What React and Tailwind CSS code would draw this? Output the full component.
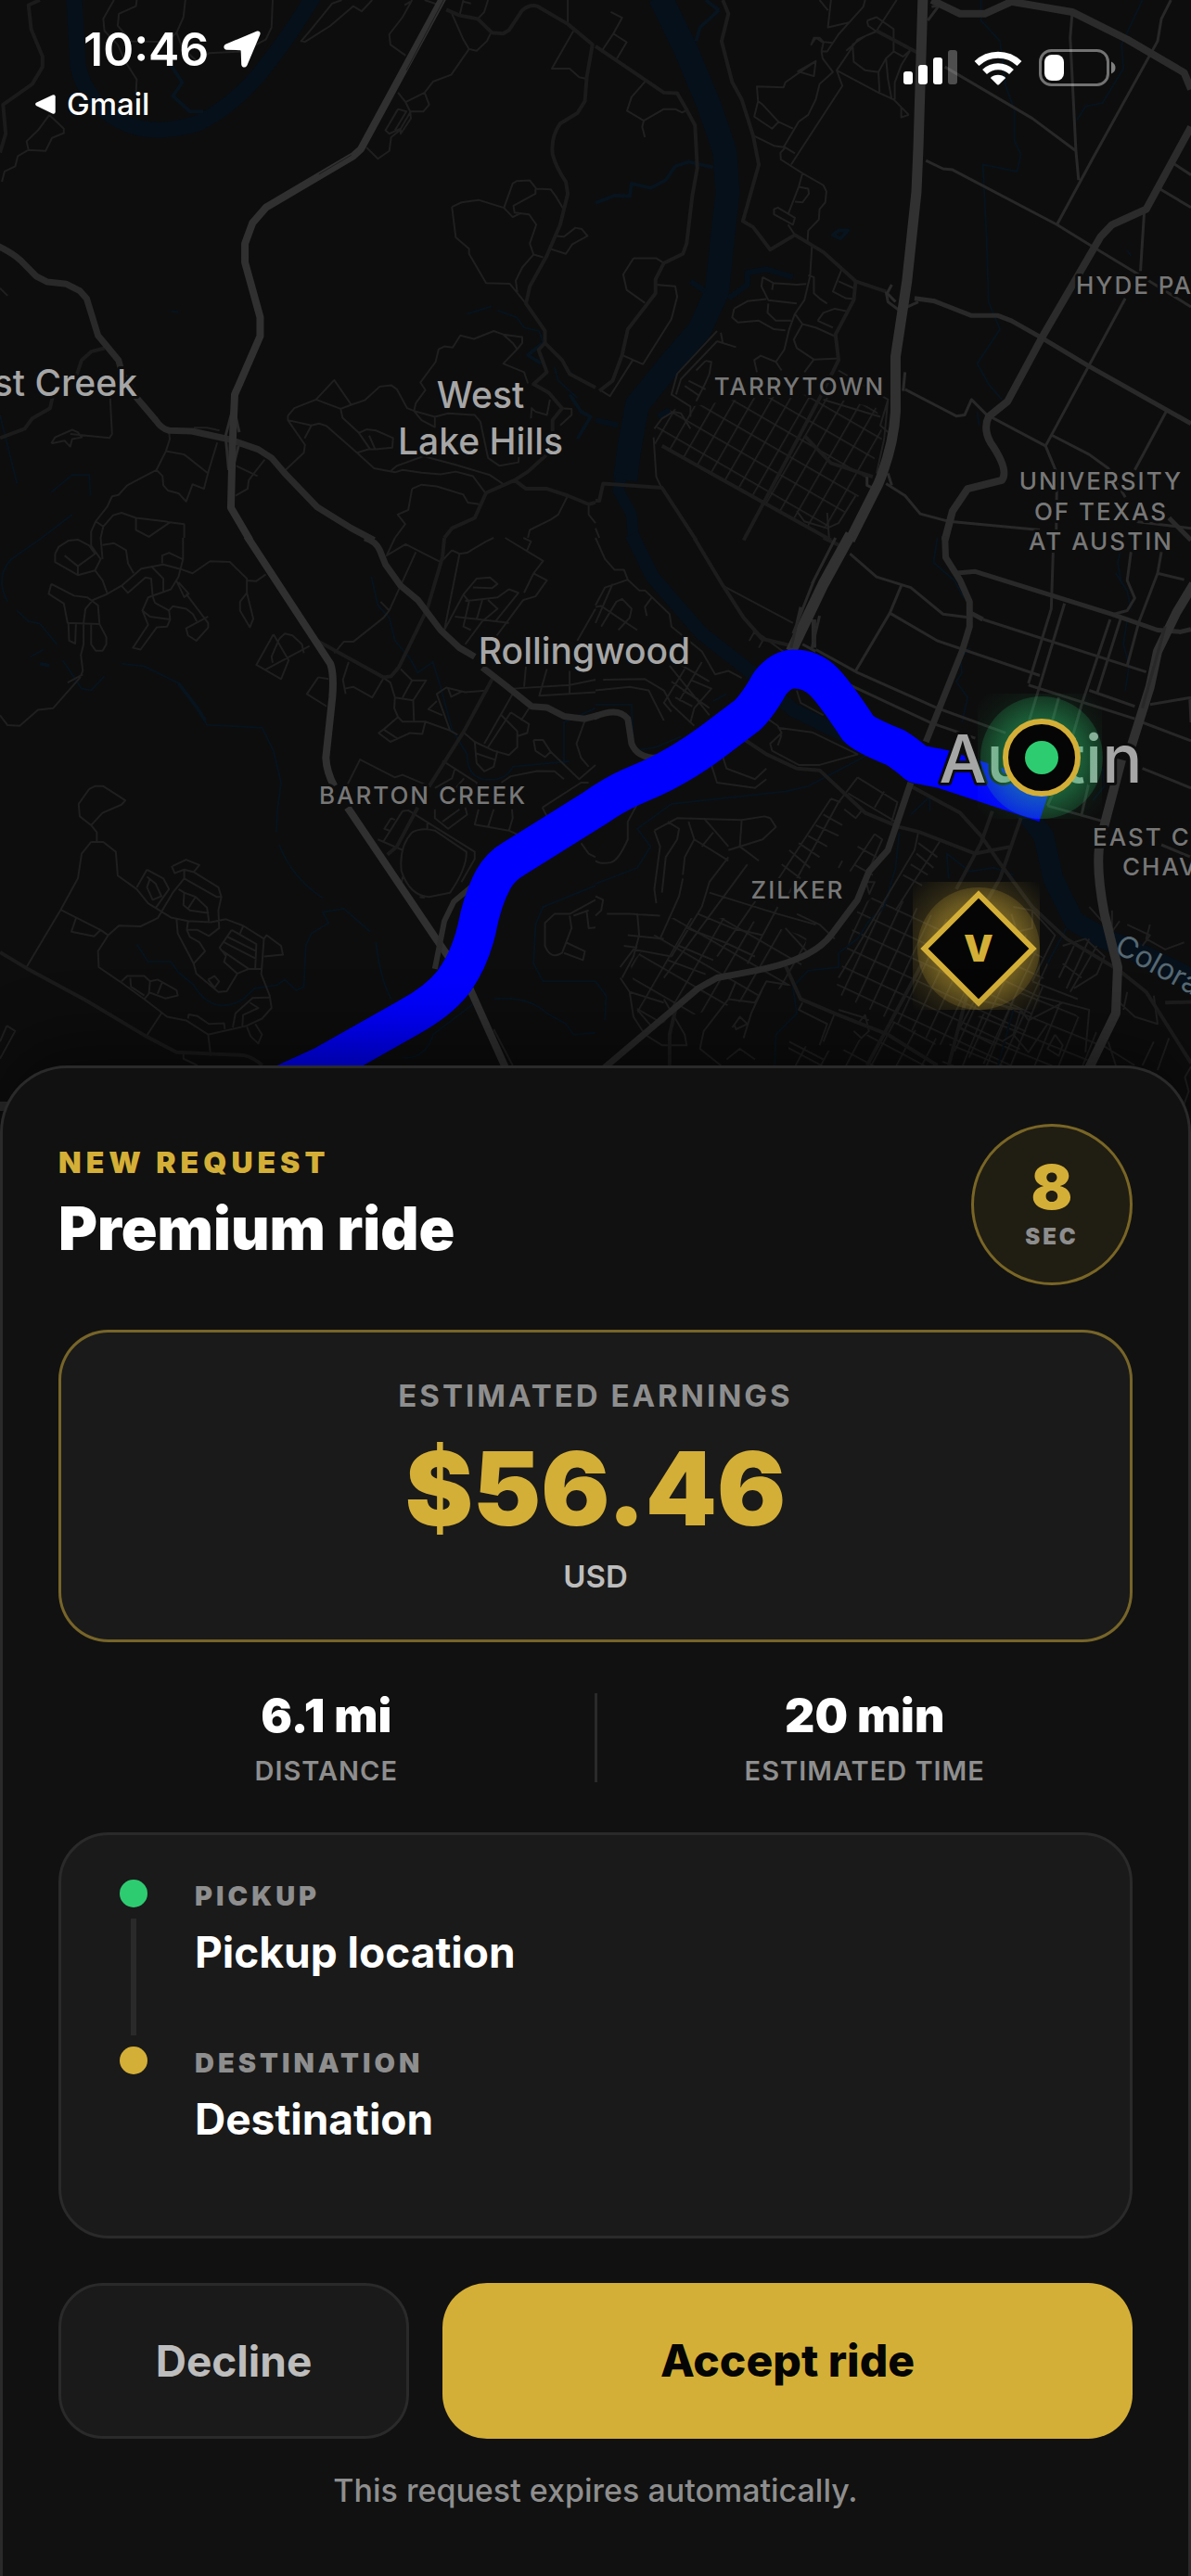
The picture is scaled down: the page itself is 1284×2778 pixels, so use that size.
import React from 'react';

// Map tiles. Every tile has its own grid, so strokes are kept non-scaling.
const tiles = [
  {
    id: 'nw',
    transform: 'scale(0.40944 0.3699)',
    layers: [
      { color: '#06101a', width: 17, d: 'M195 -10L205 190Q225 300 320 355Q400 400 520 360Q600 320 680 220Q760 110 825 -10' },
      { color: '#07131d', width: 4, d: 'M450 190L480 240 455 280 500 325 535 325M1430 1000L1390 1035 1425 1060M1500 1150L1530 1200 1555 1215 1520 1280' },
      { color: '#07131d', width: 2, d: 'M1230 915L1295 893M1310 905L1360 925 1380 955 1420 965 1430 1000M1460 1070L1470 1110 1520 1160M0 1210L20 1300 45 1410M135 1435L190 1385 235 1385 238 1445M450 908L470 910M110 1568L190 1500' },
      { color: '#1f1f1f', width: 2, d: 'M360 0L358 18 313 40 310 75 345 120 440 122 465 95 483 50 488 0M300 0L272 55 275 90 310 130 M310 130L330 180 360 232 358 270M718 0L715 80 700 115 640 150 550 155 520 180 M465 95L480 140 520 180M130 335L168 375 168 388 137 402 120 440 75 437 70 412 100 380 130 335M75 437L47 455 40 485 12 500 5 530M900 0L875 10 820 85 793 120 803 122 870 75 930 18 952 33 980 0M1085 0L1060 50 1025 100 1028 130 1068 162M1080 5L1065 15M1118 0L1150 12M1220 0L1210 45M1220 5L1240 10M1285 0L1275 35 1258 55M1495 0L1495 70M1190 40L1220 115 1235 143 1188 218 1140 238 1118 270 1068 298 1048 270M1235 143L1255 148 1282 120 1293 95M1118 270L1130 305 1115 325 1080 325 1068 298M1080 325L1082 345 1055 390 1055 378 1030 400 1025 440 995 463 965 430M1048 318L1015 380 1025 390 1055 375 1080 328M1048 318L1070 325 1040 380M1510 90L1453 200 1500 200 1525 225 1545 230M1190 603L1200 692 1235 725 1235 740 1280 825 1342 827 1385 885M1190 603L1215 590 1260 583 1327 606 1350 535 1360 528 1395 526 1412 550 1450 552 1465 575 1485 612M1410 550L1410 565 1352 600 1355 620 1393 625 1412 655 1395 710 1405 742 1430 750M1327 606L1350 633 1370 622M1405 742L1375 780 1358 818 1362 852M1465 688L1485 690 1515 664 1532 668 1547 688 1507 712 1490 740 1448 725M0 840L20 862M1090 1198L1095 1175 1120 1137 1107 1115 1147 1055 1155 1018 1170 1010 1192 1013 1212 978 1248 988 1300 965 1325 975 1350 1000 1362 1018 1325 1060 1380 1085 1390 1118M1325 975L1375 983 1375 1000 1362 1018M758 1212L775 1190 832 1165 880 1108 925 1180 897 1192 832 1165M925 1180L960 1167 1000 1127 1030 1123 1045 1135 1072 1190 1090 1198 1145 1215 1145 1245 1110 1225 1090 1198M758 1212L758 1225 803 1297 800 1320 750 1372M758 1225L820 1240 802 1278M820 1240L840 1235 860 1242 940 1320 985 1365 1040 1377 1060 1370 1110 1378 1160 1383 1200 1375 1245 1388 1278 1437M897 1192L902 1218 945 1262 975 1310M945 1262L965 1252 990 1255 1035 1277 1033 1305 988 1310 972 1270M940 1320L970 1310 988 1310M1030 1372L1045 1358 1115 1330 1200 1355 1290 1385 1330 1415M1145 1215L1180 1205 1250 1210 1265 1230 1285 1335 1315 1358 1365 1348 1368 1310M1085 1425L1110 1413 1150 1418 1220 1442 1232 1465 1262 1470M1085 1425L1075 1487 1047 1500 1067 1528 1040 1568M1495 1445L1470 1500 1450 1515 1395 1545 1390 1568M1550 1470L1550 1500 1568 1525M290 1160L295 1265 288 1277 185 1265M135 1293L145 1275 190 1253 205 1260 215 1275 190 1280 185 1302 170 1285 135 1293M445 1258L447 1280 437 1315 412 1370 335 1415 312 1443 295 1447 282 1478 252 1520 240 1550 240 1568M437 1315L485 1325 548 1380M412 1370L428 1388 430 1415 442 1430 470 1438 490 1462 507 1412 537 1425 550 1370 572 1290M252 1520L272 1535 265 1568M272 1535L298 1502 320 1495 358 1510 358 1545 392 1565 447 1523 435 1520 358 1510M447 1523L485 1528 485 1568M510 1247L545 1247 578 1255M622 1358L678 1388M697 1340L672 1375 655 1400 652 1425 620 1445M1448 1165L1440 1210 1410 1200 1400 1190 1398 1220M1475 1190L1505 1192 1505 1210 1475 1240' },
      { color: '#1b1b1b', width: 4, d: 'M105 0L75 15 82 85 112 165 112 195 85 245 8 305 15 390 0 445M275 1015L240 1025 215 1050 200 1100M140 1150L132 1190 85 1220 65 1250 0 1277M1175 28L1210 45 1258 55 1295 95 1325 98 1340 88 1375 30Q1395 12 1415 18L1495 70 1560 130 1545 225 1540 295 1520 330 1475 360Q1450 400 1455 450Q1465 490 1490 530L1495 565 1475 655 1440 745 1395 835 1385 885 1435 965 1435 1000 1480 1050 1500 1090 1568 1130M1435 1000L1418 1020 1440 1085 1405 1120 1445 1145 1480 1190 1455 1225 1455 1310 1390 1375 1355 1400 1280 1437 1250 1510 1190 1540 1170 1568M1355 1400L1385 1425 1440 1425 1495 1445 1550 1470 1568 1465' },
      { color: '#292929', width: 7, d: 'M-10 715Q30 735 55 760L95 805 125 822 175 828 210 848 228 870 258 978 312 1050 322 1090L360 1160 410 1225Q425 1250 445 1255L505 1257 600 1280 680 1310 715 1335 750 1380 835 1478 925 1540 985 1575' },
      { color: '#2b2b2b', width: 3, d: 'M618 1170L594 1270 602 1370M618 1200L630 1260M628 1300L612 1370' },
      { color: '#303030', width: 8, d: 'M1168 -10L950 435 930 455 700 605 665 650 645 710 645 765 685 925 685 980 630 1120 618 1150 612 1300 608 1480 658 1575' },
      { color: '#1c1c1c', width: 1, d: 'M1168 0L1070 205M925 452L840 508' },
    ],
  },
  {
    id: 'ne',
    transform: 'translate(642 0) scale(0.40944 0.3699)',
    layers: [
      { color: '#06101a', width: 26, d: 'M170 -10L240 150 300 310 340 440 348 560 332 720 320 850 275 960 190 1070 110 1180 90 1300 78 1400' },
      { color: '#06101a', width: 12, d: 'M70 1380L60 1430 95 1500 100 1575' },
      { color: '#06101a', width: 6, d: 'M350 870L400 830 400 795 450 785 520 808M0 1225L60 1240M165 1215L195 1195M250 820L290 850' },
      { color: '#07131d', width: 4, d: 'M325 30L275 80 265 120M290 0L325 30M0 592L50 570 90 572 95 535 145 548 185 525 210 485 245 472 310 488M625 685L640 672 665 672 645 695Z' },
      { color: '#07131d', width: 2, d: 'M1015 0L1015 60 1065 120 1080 250 1103 320 1103 410 1120 450 1110 500 1020 480 1030 700 1035 880 1065 960 1005 1060 1035 1120 1070 1165M1440 0L1385 130 1390 200 1335 300 1290 310 1268 350M1005 1200L1010 1240M1400 730L1410 745' },
      { color: '#202020', width: 2, d: 'M40 35L70 52 47 98 82 123 53 177M47 98L17 148M135 232L95 283 83 323 127 352 123 370 130 400M127 352L180 318 210 318 228 328 243 320M100 753L160 753 180 767M100 753L73 800 82 845 130 883M158 830L210 835 215 865 200 930 125 1062 70 1035M98 1050L38 1155 10 1135M620 0L612 80 670 65M590 0L612 30M710 0L705 20 640 100 610 150 595 150M793 0L740 90 690 115 635 205 650 250 515 480M595 150L600 125 580 110 568 130 575 110 590 110 600 122 625 125M595 150L598 170 625 210 590 245 580 290 560 335 535 355 495 430M580 178L575 222 533 208 580 178 500 240 495 255 425 252 428 295 418 340 465 375 482 355 440 305 428 295M482 355L520 375M415 395L470 425 500 430 525 447M500 430L487 445 488 465 545 505 600 540 608 558 605 590 590 610 588 640 560 672 558 710M545 505L535 545 507 625M535 545L560 550 562 565 545 590 525 588M470 610L480 605 525 635 520 655 470 625ZM507 655L525 685M715 60L740 50 785 85 785 150 765 170 745 210 710 205 680 180 677 130 710 105 740 92 718 75 715 60M660 148L680 130M635 205L745 270 785 290 825 335M745 210L748 270M765 170L770 230 780 290M785 150L810 165 830 145 805 190 788 240 788 290M805 310L805 342 825 335M570 715L565 805M560 803L575 808 575 855 590 870 610 885M650 780L625 850 660 870 685 872M640 820L680 840M565 805L550 875 525 915M440 808L437 835 455 875 530 885M440 808L468 825 530 830 555 828M468 825L465 845M455 885L453 912 475 935 515 935M525 915L510 960 497 1020 475 1055 490 1080M525 915L545 945 522 990 530 1015 575 1048 640 1045M545 945L580 955 630 980M575 1048L550 1085M585 935L600 912 630 900 665 908M585 935L625 955M475 1055L435 1037 418 1050 425 1085M365 900L360 925 375 940 430 935 470 960 500 963M365 900L400 878 450 872M320 965L215 1090 200 1150 250 1185 250 1215M320 995L370 1012M320 995L225 1105 212 1150M290 1052L265 1080M290 1052L305 1055 300 1090 290 1115 265 1170M330 970L335 1000M245 1110L290 1135M235 1125L275 1155M155 1250L175 1220 205 1200 225 1205 250 1250M153 1275L160 1390 175 1425M530 1490L550 1520 610 1540 640 1525 685 1445M640 1080L770 1165 750 1240 770 1260M770 1165L760 1280 740 1380M600 1165L750 1215M610 1495L615 1568M0 1540L10 1568' },
      { color: '#1c1c1c', width: 4, d: 'M0 135L180 270 215 272 240 320 262 365 268 490 255 570 240 710 230 740 180 767 158 815 158 855 85 960 70 1035 45 1110 10 1140M335 0L350 40 332 120 360 240 385 290 415 395 430 480 388 645 415 662 460 728 525 685 600 735 685 820 765 850M685 820L680 875 632 975 640 1050 600 1140 390 1575M740 90L850 155M0 1460L10 1460 20 1410 175 1422 265 1575M550 1270L620 1350 730 1390M175 1300L620 1575' },
      { color: '#282828', width: 3, d: 'M920 195L1150 345 1265 440M1255 40L1250 110 1265 440 1272 525M1515 0L1490 55 1480 120 1310 460 1215 655M870 468L915 492 940 495 1215 655 1310 720 1430 800 1568 895M1445 615L1435 790M1395 870L1185 1300 1215 1380 1213 1568M1505 1195L1420 1370M1200 1268L1300 1325 1350 1365 1395 1450M1485 550L1568 605M1520 475L1568 510M1040 1215L1185 1300M1420 1520L1568 1540M815 1135L950 1213 972 1210 990 1165 1035 1215M765 1410L815 1445 855 1498 930 1520 1170 1545M765 850L770 880 800 905 850 880M885 20L905 15 875 60' },
      { color: '#292929', width: 5, d: 'M840 870L890 877 990 920 1060 920 1095 935 1175 985 1295 1065 1568 1235M1510 1510L1568 1575' },
      { color: '#2b2b2b', width: 8, d: 'M885 0L960 40 1025 40 1095 5 1175 20 1255 35 1400 115 1550 212 1568 260M1568 370L1450 610 1360 655 1330 690 1175 985 1085 1170 1035 1215Q1020 1250 1040 1290Q1090 1370 1070 1400L980 1425 940 1490 920 1575' },
      { color: '#2a2a2a', width: 3, d: 'M770 1380L780 1415M715 1390L715 1415 735 1425M780 830L768 855 790 880M815 1085L810 1140' },
      { color: '#313131', width: 11, d: 'M862 -10L850 430 845 560 820 820 790 1040 790 1200Q785 1300 745 1410L670 1575' },
    ],
  },
  {
    id: 'sw',
    transform: 'translate(0 580) scale(0.40944 0.38265)',
    layers: [
      { color: '#07131d', width: 2, d: 'M110 0L30 60Q-15 110 20 180M45 205L75 235 105 242 150 300M80 335L115 315M105 352L130 360M165 345L215 425 240 430 275 390M320 355L380 362 470 410 520 480 545 527 690 535 720 600 740 690 730 770 728 830M735 865Q770 960 850 1015M360 1145L390 1195 450 1195 470 1225 510 1260Q560 1350 640 1300L670 1270 730 1260 750 1245 780 1275 800 1265 805 1150 820 1115 865 1085 850 1055 905 1045 975 1110M990 1140Q1000 1240 1030 1300M978 110L995 190 1025 225 1040 290 1080 340 1100 380 1140 350 1160 420 1190 540 1230 610Q1230 670 1270 680Q1330 690 1350 645L1500 630M1568 480L1485 520 1485 640M1568 980L1430 1040 1410 1090 1405 1200 1430 1250 1568 1250M1060 1465Q1120 1470 1140 1400L1250 1310M1300 1300Q1390 1290 1440 1340L1490 1370 1510 1400 1568 1395' },
      { color: '#07131d', width: 4, d: 'M470 410L520 480 540 515M105 355L130 360' },
      { color: '#1f1f1f', width: 2, d: 'M145 45L155 25 180 8 205 5 235 22 250 45 205 80 170 50M145 45L145 68 205 105 205 80M205 105L250 92 265 60 240 22M265 0L270 60M240 0L240 22M270 20L300 15 332 35 337 72 352 100M250 92L270 120 283 158 245 175 225 200 220 240 220 300 213 330 218 375 210 395 140 480 100 485 52 530 20 528 0 500M135 130L128 158 168 185 178 240 262 243 258 190 230 168 195 163 135 130M180 240L182 290 198 298 200 243M240 243L240 300 252 318 270 318 280 300 280 280 262 243M178 408L218 385M283 158L320 135 372 87 430 75 475 88 507 100 553 66 605 68 650 115 650 155 667 228 658 252 632 205 632 180 650 155M650 120L675 122 700 103M320 135L337 155 383 112 398 115 402 165 408 183 445 205 448 230 395 222 375 205 390 168 450 145 470 110 482 60 482 0M398 80L430 115 430 150M427 72L427 50 445 42 480 60M465 122L485 167 497 158 470 125M490 158L548 240 548 253 517 290 495 275 490 255 548 222M445 205L455 193 490 200 508 215 518 235M375 205L390 245 350 310 370 315 413 252 440 250 448 230M720 272L675 358 740 398 760 345 720 272M735 285L750 270 770 275 795 300 800 325M735 285L715 335 718 352M698 372L815 305M838 393L808 440 860 475M838 393L865 398M880 325L905 293 930 293 1010 225 1025 205 1095 40M1002 180L1025 205M1040 0L1018 50 1068 18 1160 68M918 350L903 400 910 440M908 425L930 420 980 450 1010 395 1028 408 1040 450 1088 458 1122 402 1085 402 1055 370M1085 402L1060 450M1040 450L1038 480 1048 505 1010 540 997 550 1028 575 1080 550 1112 553 1120 518 1060 518 1048 505M1088 458L1090 518M1120 518L1185 543 1205 555M1010 540L1045 565M1185 543L1150 440 1175 422 1225 435 1285 430M1180 425L1188 448 1218 432M1150 460L1128 483 1165 500M1220 548L1250 575 1300 600 1340 612 1362 590 1362 545 1320 500M1250 575L1255 635 1275 658 1300 645 1310 600M1252 607L1302 625M1350 440L1275 580M1345 492L1393 525 1388 550 1360 560M1345 492L1285 590M1393 480L1372 515M915 695L948 625 1040 675 1060 668 1135 702M1165 628L1255 690 1255 720M1198 650L1190 678 1145 705M1222 678L1200 705M1405 570L1430 570 1450 603 1435 618 1410 600 1405 570M1450 603L1525 680 1568 640M1540 515L1518 580 1530 620 1550 645M1320 690L1345 672 1415 657 1460 658 1485 680M1190 35L1210 45 1170 260M1190 35L1155 75M1170 260L1220 160 1255 115 1290 112 1310 130 1295 142 1245 140M1210 45L1230 42 1280 10 1300 0M1330 0L1430 65 1405 100 1440 120 1410 165 1378 175 1305 280M1378 0L1398 10 1388 35M1198 222L1305 235 1365 155 1340 145 1310 168 1225 178M1220 160L1235 180 1220 250 1240 260M1270 175L1255 230M1285 175L1310 200 1270 235 1225 300M1305 235L1340 240M1405 100L1380 155M1385 360L1380 420M1440 370L1420 445 1568 435M1500 375L1500 440M1350 425L1500 415 1568 400M1568 200L1520 290M235 708L250 700 272 700 330 740 320 752 270 775 240 810 210 785 207 750 235 708M240 810L255 830 255 855M240 857L215 890 205 960 160 1048 68 1213M240 857L272 857 305 885 310 952 360 990 390 1030 450 1070 495 1080 555 1083 595 1075 640 1093 695 1130 688 1230 710 1290 715 1325 690 1355 650 1375 548 1400 490 1360 440 1350 380 1300 315 1250 260 1210 258 1165 285 1120 313 1093 370 1095 415 1072 455 1000 485 960 485 935M160 1048L265 1105 285 1120M200 1072L188 1110 248 1123 265 1105M387 935L360 985M387 935L430 960 445 990 410 1043M395 960L387 985 402 1020 425 1010 410 975 387 955M455 925L490 907 525 922 510 942 485 935 460 945 452 925M485 960L570 1012 583 1012M510 942L575 985 583 1012 575 1050 577 1100 550 1122 520 1105 492 1105 495 1080M470 990L485 1000 515 1012 545 1042 550 1080M485 1000L483 1035 500 1050 550 1058M515 1012L495 1045M465 1075L468 1115 510 1200 540 1165 525 1140 500 1125 492 1105M510 1200L517 1228 575 1280 597 1278 625 1228 655 1215 690 1215M610 1105L578 1155 595 1178 590 1195 625 1228M610 1105L675 1145 672 1215M600 1125L675 1165M590 1140L675 1187M580 1160L655 1215M640 1095L632 1115M695 1130L702 1120 740 1150 745 1175 695 1180M548 1245L565 1235 577 1250 565 1268 548 1245M320 1250L335 1235 380 1235 395 1250 392 1285 380 1300M343 1240L345 1265 380 1290M395 1250L415 1245 465 1275 468 1290 435 1298 390 1280M428 1250L415 1285M425 1340L385 1405M495 1355L497 1343 520 1348 550 1370 590 1368 592 1385M548 1400L555 1460M483 1450L483 1468 520 1487M710 1295L665 1297 620 1340 613 1380M658 1310L680 1325 640 1345 638 1378M650 1378L660 1405 680 1425 690 1400 672 1370M18 1375L40 1390 0 1468M18 1375L0 1420M1060 770L1075 768 1250 885 1250 905 1215 970M1125 800L1125 822M1085 830Q1050 870 1057 940Q1080 1010 1130 1012L1185 1000Q1230 930 1228 885L1145 825Q1110 815 1085 830M1060 770L1010 855M995 850L1060 880M1030 790L1012 820 1025 825M1030 790L1040 795M1060 955L1058 970M1105 1012L1118 1015M1145 765L1145 790 1180 820 1230 780 1225 760M1260 765L1250 808 1340 825 1350 790 1348 765M1300 765L1285 815M1340 825L1370 840M1165 800L1210 765M1428 760L1440 785M1568 1020L1500 1060 1460 1060 1435 1085 1435 1150Q1450 1190 1480 1170L1505 1100 1500 1065M1490 1140L1540 1165 1535 1190 1485 1170M1510 1065L1550 1050M1545 1055L1550 1100 1568 1098M1530 860L1550 890 1568 900M1428 760L1530 690 1550 690M1300 1385L1350 1487' },
      { color: '#1b1b1b', width: 4, d: 'M0 1168L70 1213 225 1303 385 1405 465 1450 640 1458Q670 1465 690 1487M830 287L1010 393 1030 390 1050 365 1125 200 1165 55 1170 0M1300 390L1220 548 1130 700M1100 760L1045 870 1020 893' },
      { color: '#292929', width: 7, d: 'M960 0Q990 10 1000 35L1015 75 1055 135 1100 175 1160 260 1210 310 1250 335M1270 365L1330 415 1400 475 1440 478 1485 503 1540 510 1575 500' },
      { color: '#303030', width: 8, d: 'M650 -5L870 355Q880 385 875 450L858 620Q860 660 880 700M915 760L1145 1125 1235 1265 1340 1515' },
      { color: '#2c2c2c', width: 6, d: 'M1240 985L1195 1025 1170 1080 1145 1215' },
      { color: '#2b2b2b', width: 10, d: 'M-5 1602L40 1602' },
    ],
  },
  {
    id: 'se',
    transform: 'translate(642 580) scale(0.40944 0.38265)',
    layers: [
      { color: '#06101a', width: 15, d: 'M95 -10L150 110 280 270 400 370 520 485 720 590' },
      { color: '#06101a', width: 22, d: 'M1130 770L1180 840 1205 960 1260 1080 1340 1130 1420 1165 1575 1245' },
      { color: '#07131d', width: 2, d: 'M900 0L890 70 945 120 970 170M720 610L560 700 500 715 200 750 110 820 145 870 110 930 0 975M985 310L960 340 965 380 950 405 980 450 965 520M1390 0L1375 70 1385 130M1400 230L1390 300 1405 360 1395 430M0 470L95 470 100 600 160 590 225 560M310 460L345 440M830 780L880 730 880 770M800 830L790 930 760 1040 720 1080 690 1130 640 1170 640 1210 560 1220 520 1265 530 1340 475 1400 472 1487M930 960L925 890 985 940 1050 930 1100 950M1370 100L1400 150 1410 200M1240 1100L1190 1200M0 1250L28 1290 25 1360M1335 650L1340 700 1310 740M1060 1487L1100 1330' },
      { color: '#1f1f1f', width: 2, d: 'M0 0L25 60 50 90 75 90 85 118 25 140 0 190M45 130L0 240M85 118L115 148 130 148 195 215 200 250 280 320 315 385 350 375 385 395M150 165L130 195 135 220M15 250L55 180 70 172 95 200 90 225 60 260M0 195L15 192 60 225 110 260M335 135L520 240M405 290L420 262 500 325M415 262L440 290 430 310M20 400L130 398 180 430 200 470 260 530M200 405L300 480M235 370L180 465 200 490M280 350L220 460M0 430L90 420 140 430 180 515M530 430L540 465 600 500M250 400L305 425 260 480 250 520M230 430L270 455M210 450L255 475M220 355L300 405M195 360L300 500M480 535L570 548 690 610 590 640 535 640 465 600 460 580 490 550 480 530 440 500M490 555L480 585M305 640L320 690 420 705 450 680M330 600L345 650 420 680 450 650M110 750L85 800 85 850Q60 910 40 915Q10 920 0 910M155 825L215 790 385 795 445 785 460 790M155 825L170 870 155 990 160 1030M190 800L220 820 215 850 185 900 175 1000M245 800L260 850 350 910M285 790L350 870M385 795L380 870 430 910M460 790L475 815 440 850 350 880M260 850L235 900 230 950M310 830L280 870M620 735L470 980M640 745L500 1020M620 735L645 745M600 780L650 810M580 810L640 840M560 840L610 870M535 860L590 900M510 880L565 930M490 920L540 960M655 765L685 790 700 770M690 675L640 745M690 675L795 745 780 800M760 715L735 760M665 720L790 800M735 835L670 940M735 835L755 850 710 960 720 1000M690 870L740 900M680 920L730 950M650 910L640 930M700 970L735 970 720 1005M0 1010L20 1020 15 1050 0 1065M30 1060L90 1060 170 1065M110 1058L115 1120 100 1180 70 1240M85 1120L180 1130M75 1150L110 1155M65 1210L100 1160 200 1180M230 960L220 1010 170 1130M350 900L300 970 280 1040 200 1180M400 920L180 1240M300 1000L390 1030M270 1060L360 1100M240 1100L340 1140M220 1150L310 1190M190 1190L290 1230M430 1010L320 1180M480 1040L400 1200M390 1030L480 1060 580 1090M360 1100L440 1120M340 1140L420 1180M530 1060L590 1090 630 1130M500 1100L560 1170M65 1240L90 1280 180 1310M90 1280L100 1350 130 1400 175 1430 240 1430 235 1400 180 1300M110 1330L150 1380M370 1250L350 1300 285 1390 275 1440 330 1487M360 1380L380 1350 400 1370 370 1385 365 1370M350 1300L420 1310 450 1250 510 1260M440 1270L410 1340 390 1410M345 1470L380 1440 420 1470M545 1310L535 1330 610 1370 590 1430M560 1310L630 1340 600 1420M640 1330L700 1350 720 1360M690 1370L710 1345 720 1390 700 1410 680 1390M510 1420L600 1470M850 830L840 880 640 1240M910 850L790 1050M850 860L900 900M845 890L890 930M830 920L875 950M810 950L860 980M950 1400L1000 1300M1000 1300L1120 1330 1100 1400 1070 1420M960 1380L1050 1430M1120 1330L1140 1360 1230 1310M1100 1400L1140 1450 1190 1370M1210 1400L1230 1430 1220 1460 1190 1440 1210 1400M1160 1290L1300 1330 1290 1450M1150 1250L1270 1300M1150 1050L1210 1120 1150 1250M1100 1040L1150 1050 1150 1100 1110 1110 1095 1060M1230 1150L1290 1130 1340 1180 1320 1230 1260 1270M1230 1200L1280 1240M1260 1150L1220 1240M1300 1130L1240 1270M1320 1150L1250 1280M1370 1300L1420 1350 1480 1370 1470 1290M1400 1280L1390 1330M1335 1430L1420 1487M1350 1420L1370 1487M1470 1420L1440 1487M1568 1490L1552 1520 1562 1560 1545 1610M1510 1410L1500 1440 1480 1500M1300 1040L1350 1100M1360 1050L1360 1110 1380 1080M1400 1090L1460 1120 1440 1150M1460 1090L1450 1130 1500 1160 1550 1140' },
      { color: '#1c1c1c', width: 4, d: 'M260 0L330 125 390 225 440 285 520 305M600 0L640 20M380 560L450 610 530 650 590 655 710 775 800 815 850 828 1000 890 1095 870M830 700L960 775 1015 840 1060 910 1150 1040 1240 1130 1380 1220 1450 1280 1568 1480M1045 770L1015 860 950 990M1120 790L1065 960 1000 1080M500 1205L540 1300 640 1345 770 1400 900 1487M195 1487L195 1400 215 1310M715 1487L860 1200M930 1487L980 1280M1500 1310L1568 1308' },
      { color: '#272727', width: 3, d: 'M670 45L740 110 830 140 915 215 985 225M805 135L775 212 685 375M775 212L900 290 1170 388M1020 230L1450 378M580 315L690 380 900 480 1080 550M660 410L880 520 1000 565M1235 185L1090 700M1205 40L1200 200 1140 410M1355 230L1280 470 1240 620M1385 220L1320 440M1410 40L1400 120 1420 170 1400 205 1365 215M1490 40L1480 100 1430 240 1400 360M1480 100L1550 118M1140 415L1420 510M1300 430L1420 475M1220 450L1150 720M1440 520L1568 572M1440 650L1568 705M1190 755L1340 800M1460 470L1568 450M1490 865L1568 900M1240 640L1190 755M1310 640L1280 780' },
      { color: '#292929', width: 5, d: 'M575 230L575 310M945 100L1000 95 1360 215 1480 260 1540 265 1568 258M985 210L1020 230' },
      { color: '#2a2a2a', width: 7, d: 'M920 -5L922 55 960 120 985 180 985 250 965 320 870 575M830 690L770 880 720 940 690 1020 620 1120Q570 1190 420 1220L320 1240 270 1270 5 1510M-5 505Q60 475 85 510L95 580Q110 620 160 620' },
      { color: '#303030', width: 10, d: 'M1575 130L1530 210 1480 320 1460 420 1410 590M1385 625L1330 850Q1315 920 1340 1060L1375 1210 1370 1340 1290 1515' },
      { color: '#313131', width: 12, d: 'M672 -10L600 130 515 320' },
      { color: '#282828', width: 3, d: 'M632 0L570 130M540 195L515 310M545 300L580 320M590 220L570 310M575 120L520 270M1500 250L1440 480M1565 455L1568 520' },
    ],
  },
];

// Dense residential blocks: outline + spacing of the street grid
const grids = [
  { id: 'tarrytown', points: '706,464 722,442 800,430 880,425 945,440 952,470 930,530 905,560 880,575 705,478', angle: 30, w: 17, h: 22 },
  { id: 'bouldin', points: '925,980 950,960 1010,990 1100,1000 1130,1040 1090,1160 1020,1130 900,1070', angle: 25, w: 17, h: 20 },
  { id: 'travis', points: '850,1125 905,1135 960,1100 1010,1120 1000,1160 850,1160', angle: 28, w: 24, h: 26 },
  { id: 'east', points: '1030,1110 1120,1060 1190,1120 1160,1160 1010,1160', angle: 22, w: 24, h: 20 },
  { id: 'zilker', points: '680,1040 720,990 800,990 870,1010 860,1060 800,1080 690,1110', angle: 30, w: 30, h: 26 },
];

const towns = [
  { text: 'West', x: 518, y: 440, anchor: 'middle' },
  { text: 'Lake Hills', x: 518, y: 490, anchor: 'middle' },
  { text: 'st Creek', x: 148, y: 427, anchor: 'end' },
  { text: 'Rollingwood', x: 630, y: 716, anchor: 'middle' },
];

const districts = [
  { text: 'TARRYTOWN', x: 862, y: 426, anchor: 'middle' },
  { text: 'HYDE PA', x: 1160, y: 317, anchor: 'start' },
  { text: 'UNIVERSITY', x: 1187, y: 528, anchor: 'middle' },
  { text: 'OF TEXAS', x: 1187, y: 561, anchor: 'middle' },
  { text: 'AT AUSTIN', x: 1187, y: 593, anchor: 'middle' },
  { text: 'BARTON CREEK', x: 456, y: 867, anchor: 'middle' },
  { text: 'ZILKER', x: 860, y: 969, anchor: 'middle' },
  { text: 'EAST C', x: 1178, y: 912, anchor: 'start' },
  { text: 'CHAV', x: 1210, y: 944, anchor: 'start' },
];

function RideMap() {
  return (
    <svg viewBox="0 0 1284 1260" className="absolute inset-x-0 top-0 w-full" aria-label="Route map">
      <defs>
        <radialGradient id="greenGlow">
          <stop offset="0.5" stopColor="#2ecc71" stopOpacity="0.4" />
          <stop offset="1" stopColor="#2ecc71" stopOpacity="0.17" />
        </radialGradient>
        <radialGradient id="goldGlow">
          <stop offset="0.4" stopColor="#d4af37" stopOpacity="0.46" />
          <stop offset="1" stopColor="#d4af37" stopOpacity="0.18" />
        </radialGradient>
        <radialGradient id="greenHaze" r="0.66">
          <stop offset="0.5" stopColor="#2ecc71" stopOpacity="0.12" />
          <stop offset="1" stopColor="#2ecc71" stopOpacity="0" />
        </radialGradient>
        <radialGradient id="goldHaze" r="0.7">
          <stop offset="0.5" stopColor="#d4af37" stopOpacity="0.24" />
          <stop offset="1" stopColor="#d4af37" stopOpacity="0" />
        </radialGradient>
        {grids.map((g) => (
          <pattern key={g.id} id={g.id} width={g.w} height={g.h} patternUnits="userSpaceOnUse" patternTransform={`rotate(${g.angle})`}>
            <path d={`M0 0H${g.w}M0 0V${g.h}`} stroke="#222" strokeWidth="3" fill="none" />
          </pattern>
        ))}
      </defs>
      <rect width="1284" height="1260" fill="#0d0d0d" />

      {grids.map((g) => (
        <polygon key={g.id} points={g.points} fill={`url(#${g.id})`} />
      ))}

      {tiles.map((tile) => (
        <g key={tile.id} transform={tile.transform} fill="none" strokeLinejoin="round">
          {tile.layers.map((layer, i) => (
            <path key={i} d={layer.d} stroke={layer.color} strokeWidth={layer.width} vectorEffect="non-scaling-stroke" />
          ))}
        </g>
      ))}

      {/* Route */}
      <path
        d="M270 1185L349 1149L441 1097Q472 1080 488 1060Q506 1036 514 1002Q520 970 532 948Q540 934 554 926L642 871Q662 857 680 849L703 839Q735 824 765 802L806 771Q818 759 830 737Q842 722 855 721.500Q874 721 888 735Q900 747 925 785Q932 793 965 806Q975 812 989 824L1017 829.500L1127 866"
        fill="none"
        stroke="#0000ff"
        strokeWidth="42"
        strokeLinejoin="round"
      />

      <g fontFamily="Inter, sans-serif" stroke="#0d0d0d" strokeWidth="6" strokeLinejoin="round" paintOrder="stroke">
        {towns.map((l) => (
          <text key={l.text} x={l.x} y={l.y} textAnchor={l.anchor} fontSize="39" fontWeight="500" fill="#a6a6a6">
            {l.text}
          </text>
        ))}
        {districts.map((l) => (
          <text key={l.text} x={l.x} y={l.y} textAnchor={l.anchor} fontSize="26" fontWeight="500" letterSpacing="2" fill="#777">
            {l.text}
          </text>
        ))}
        <text x="1122" y="844" textAnchor="middle" fontSize="72" fontWeight="500" fill="#a6a6a6">
          Austin
        </text>
        <text x="1200" y="1026" transform="rotate(29 1200 1026)" fontSize="32" stroke="none" fill="#566872">
          Colorac
        </text>
      </g>

      {/* Pickup marker */}
      <rect x="1054" y="748" width="134" height="135" fill="url(#greenHaze)" />
      <circle cx="1123" cy="817" r="66" fill="url(#greenGlow)" />
      <circle cx="1123" cy="817" r="39" fill="#050505" stroke="#d4af37" strokeWidth="6" />
      <circle cx="1123" cy="817" r="18" fill="#2ecc71" />

      {/* Driver marker */}
      <rect x="984" y="951" width="137" height="138" fill="url(#goldHaze)" />
      <circle cx="1055" cy="1023" r="66" fill="url(#goldGlow)" />
      <path d="M1055 964.500L1113.500 1023L1055 1081.500L996.500 1023Z" fill="#050505" stroke="#d4af37" strokeWidth="6" />
      <text x="1055" y="1037" textAnchor="middle" fontFamily="Inter, sans-serif" fontSize="40" fontWeight="900" fill="#d4af37">
        V
      </text>
    </svg>
  );
}

function StatusBar() {
  return (
    <header className="relative flex items-start justify-between pl-[38px] pr-[80px] pt-[22px] text-white">
      <div>
        <div className="flex items-center gap-4 pl-[52px]">
          <span className="text-[50px] font-semibold leading-[62px]">10:46</span>
          <svg viewBox="0 0 40 40" className="h-10 w-10" fill="currentColor" aria-hidden="true">
            <path d="M35.500 0.700C38.300 -0.400 40.400 1.600 39.300 4.400L25.500 37.200C24 40.700 19.400 40.200 19.200 36.400L18.700 22.200C18.700 21.500 18.400 21.200 17.700 21.200L3.500 20.700C-0.300 20.500 -0.800 16 2.700 14.500Z" />
          </svg>
        </div>
        <a href="#gmail" className="mt-1 flex items-center gap-3 text-[33px] font-medium leading-[48px]">
          <svg viewBox="0 0 22 21" className="h-[21px] w-[22px]" fill="currentColor" aria-hidden="true">
            <path d="M1 8.800Q-0.800 10.300 1 11.900L18.500 20.500Q21.500 21.600 21.700 18.500V2.300Q21.500 -0.700 18.500 0.500Z" />
          </svg>
          Gmail
        </a>
      </div>
      <div className="flex items-center gap-[18px] pt-[31px]">
        <svg viewBox="0 0 58 38" className="h-[38px] w-[58px]" fill="currentColor" aria-label="Signal">
          <rect x="0" y="23" width="10" height="14" rx="3" />
          <rect x="16" y="16" width="10" height="21" rx="3" />
          <rect x="32" y="8" width="10" height="29" rx="3" />
          <rect x="48" y="0" width="10" height="37" rx="3" fillOpacity="0.27" />
        </svg>
        <svg viewBox="0 0 52 38" className="h-[38px] w-[52px]" aria-label="Wi-Fi">
          <g fill="none" stroke="#fff" strokeWidth="7">
            <path d="M3 14.500A33 33 0 0 1 49 14.500" />
            <path d="M11.500 23.500A21 21 0 0 1 40.500 23.500" />
          </g>
          <path d="M17.800 30A12 12 0 0 1 34.200 30L27.200 37Q26 38 24.800 37Z" fill="#fff" />
        </svg>
        <svg viewBox="0 0 84 40" className="h-10 w-[84px]" aria-label="Battery">
          <rect x="1.500" y="1.500" width="73" height="37" rx="12" fill="none" stroke="#fff" strokeOpacity="0.42" strokeWidth="3" />
          <path d="M78 13.500Q82.500 15.500 82.500 20T78 26.500Z" fill="#fff" fillOpacity="0.48" />
          <rect x="6" y="6" width="21" height="28" rx="8" fill="#fff" />
        </svg>
      </div>
    </header>
  );
}

function Stat({ value, label }) {
  return (
    <div className="flex-1 text-center">
      <p className="text-[50px] font-black leading-[56px] text-white">{value}</p>
      <p className="pt-4 text-[29px] font-semibold leading-[32px] tracking-[1px] text-[#8e8e8e]">{label}</p>
    </div>
  );
}

function Stop({ label, place }) {
  return (
    <div className="h-[180px]">
      <p className="text-[29px] font-black leading-[36px] tracking-[4px] text-[#8e8e8e]">{label}</p>
      <p className="pt-[15px] text-[46px] font-bold leading-[54px] text-white">{place}</p>
    </div>
  );
}

export default function App() {
  return (
    <main className="relative flex min-h-screen flex-col overflow-hidden bg-[#0d0d0d] font-['Inter',sans-serif]">
      <RideMap />
      <StatusBar />

      <section className="relative mt-auto rounded-t-[72px] border-[3px] border-b-0 border-[#2a2a2a] bg-[#111111] px-[60px] pb-[72px] pt-[60px] shadow-[0_-24px_72px_rgba(0,0,0,0.45)]">
        <div className="flex items-center justify-between">
          <div>
            <p className="text-[32px] font-black leading-[40px] tracking-[5px] text-[#d4af37]">NEW REQUEST</p>
            <h1 className="pt-[12px] text-[64px] font-black leading-[78px] text-white">Premium ride</h1>
          </div>
          <div className="flex size-[174px] flex-col items-center justify-center rounded-full border-[3px] border-[#d4af37]/50 bg-[#d4af37]/8">
            <span className="text-[66px] font-black leading-[70px] text-[#d4af37]">8</span>
            <span className="text-[24px] font-black leading-[38px] tracking-[3px] text-[#8e8e8e]">SEC</span>
          </div>
        </div>

        <div className="mt-12 rounded-[54px] border-[3px] border-[#d4af37]/50 bg-[#1a1a1a] py-[48px] text-center">
          <p className="text-[33px] font-bold leading-[40px] tracking-[3px] text-[#8e8e8e]">ESTIMATED EARNINGS</p>
          <p className="pt-[14px] text-[110px] font-black leading-[132px] text-[#d4af37]">$56.46</p>
          <p className="pt-[9px] text-[33px] font-semibold leading-[40px] text-[#bdbdbd]">USD</p>
        </div>

        <div className="mb-[50px] mt-[51px] flex items-center">
          <Stat value="6.1 mi" label="DISTANCE" />
          <div className="h-24 w-[3px] bg-[#2a2a2a]" />
          <Stat value="20 min" label="ESTIMATED TIME" />
        </div>

        <div className="flex gap-[42px] rounded-[54px] border-[3px] border-[#2a2a2a] bg-[#1a1a1a] px-[54px] pb-[24px] pt-[48px]">
          <div className="flex w-12 flex-col items-center gap-3">
            <span className="size-[30px] rounded-full bg-[#2ecc71]" />
            <span className="h-[126px] w-[6px] bg-[#2a2a2a]" />
            <span className="size-[30px] rounded-full bg-[#d4af37]" />
          </div>
          <div>
            <Stop label="PICKUP" place="Pickup location" />
            <Stop label="DESTINATION" place="Destination" />
          </div>
        </div>

        <div className="mt-12 flex gap-9">
          <button type="button" className="h-[168px] w-[378px] rounded-[48px] border-[3px] border-[#2a2a2a] bg-[#1a1a1a] text-[46px] font-bold text-[#bdbdbd]">
            Decline
          </button>
          <button type="button" className="h-[168px] flex-1 rounded-[48px] bg-[#d4af37] text-[48px] font-extrabold text-[#050505]">
            Accept ride
          </button>
        </div>

        <p className="pt-[36px] text-center text-[34px] font-medium leading-[40px] text-[#8e8e8e]">This request expires automatically.</p>
      </section>
    </main>
  );
}
